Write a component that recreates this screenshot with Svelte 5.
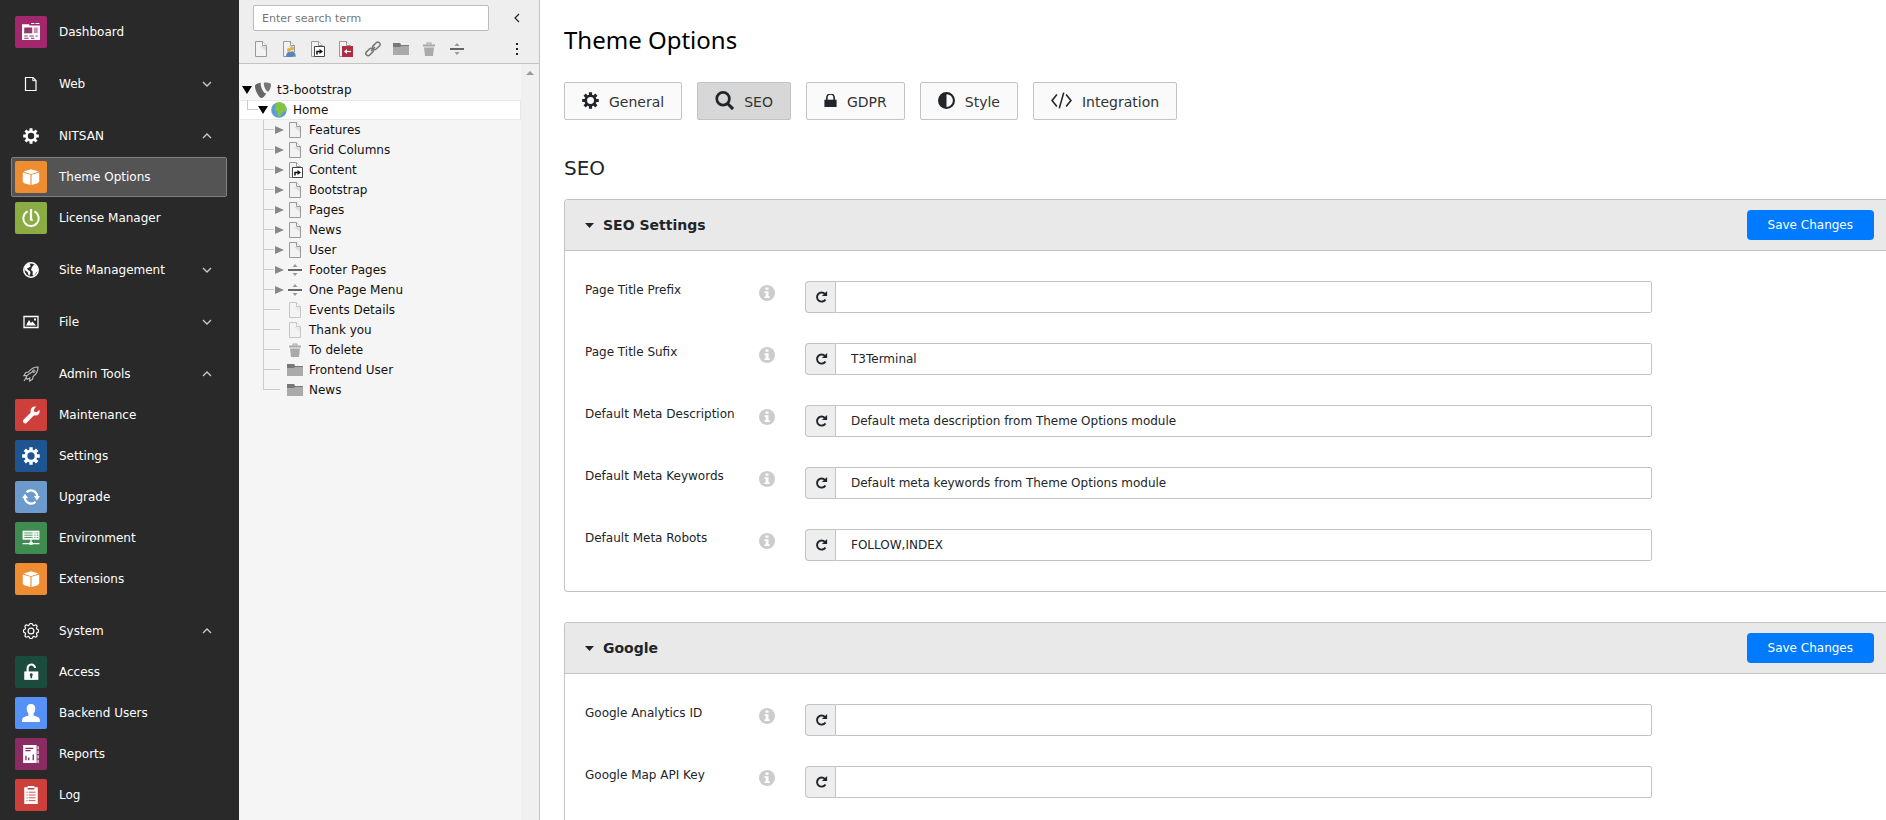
<script lang="ts">
	let activeModule = $state('Theme Options');
	let activeTab = $state('SEO');
	let activePage = $state('Home');

	const modules = [
		{
			items: [{ label: 'Dashboard', icon: 'dashboard', tone: 'plum' }]
		},
		{ title: 'Web', icon: 'file', items: [] },
		{
			title: 'NITSAN',
			icon: 'gear',
			open: true,
			items: [
				{ label: 'Theme Options', icon: 'box', tone: 'orange' },
				{ label: 'License Manager', icon: 'power', tone: 'lime' }
			]
		},
		{ title: 'Site Management', icon: 'globe', items: [] },
		{ title: 'File', icon: 'image', items: [] },
		{
			title: 'Admin Tools',
			icon: 'rocket',
			open: true,
			items: [
				{ label: 'Maintenance', icon: 'wrench', tone: 'red' },
				{ label: 'Settings', icon: 'gear', tone: 'navy' },
				{ label: 'Upgrade', icon: 'refresh', tone: 'sky' },
				{ label: 'Environment', icon: 'server', tone: 'green' },
				{ label: 'Extensions', icon: 'box', tone: 'orange' }
			]
		},
		{
			title: 'System',
			icon: 'gearOutline',
			open: true,
			items: [
				{ label: 'Access', icon: 'unlock', tone: 'forest' },
				{ label: 'Backend Users', icon: 'user', tone: 'blue' },
				{ label: 'Reports', icon: 'report', tone: 'wine' },
				{ label: 'Log', icon: 'log', tone: 'red' }
			]
		}
	];

	const tools = [
		{ label: 'New page', icon: 'page' },
		{ label: 'New backend user section', icon: 'pageUsers' },
		{ label: 'New shortcut', icon: 'pageShortcut' },
		{ label: 'New mount point', icon: 'pageMount' },
		{ label: 'New link', icon: 'link' },
		{ label: 'New folder', icon: 'folder' },
		{ label: 'New recycler', icon: 'trash' },
		{ label: 'New divider', icon: 'divider' }
	];

	const pages = [
		{ label: 't3-bootstrap', icon: 'typo3', level: 0, toggle: 'open' },
		{ label: 'Home', icon: 'earth', level: 1, toggle: 'open', last: true },
		{ label: 'Features', icon: 'page', level: 2, toggle: 'closed' },
		{ label: 'Grid Columns', icon: 'page', level: 2, toggle: 'closed' },
		{ label: 'Content', icon: 'pageShortcut', level: 2, toggle: 'closed' },
		{ label: 'Bootstrap', icon: 'page', level: 2, toggle: 'closed' },
		{ label: 'Pages', icon: 'page', level: 2, toggle: 'closed' },
		{ label: 'News', icon: 'page', level: 2, toggle: 'closed' },
		{ label: 'User', icon: 'page', level: 2, toggle: 'closed' },
		{ label: 'Footer Pages', icon: 'divider', level: 2, toggle: 'closed' },
		{ label: 'One Page Menu', icon: 'divider', level: 2, toggle: 'closed' },
		{ label: 'Events Details', icon: 'page', level: 2, hidden: true },
		{ label: 'Thank you', icon: 'page', level: 2, hidden: true },
		{ label: 'To delete', icon: 'trash', level: 2 },
		{ label: 'Frontend User', icon: 'folder', level: 2 },
		{ label: 'News', icon: 'folder', level: 2, last: true }
	];

	const tabs = [
		{ label: 'General', icon: 'cog', width: 17 },
		{ label: 'SEO', icon: 'search', width: 19 },
		{ label: 'GDPR', icon: 'lock', width: 13 },
		{ label: 'Style', icon: 'contrast', width: 17 },
		{ label: 'Integration', icon: 'code', width: 21 }
	];

	let sections = $state([
		{
			title: 'SEO Settings',
			fields: [
				{ id: 'title-prefix', label: 'Page Title Prefix', value: '' },
				{ id: 'title-sufix', label: 'Page Title Sufix', value: 'T3Terminal' },
				{
					id: 'meta-description',
					label: 'Default Meta Description',
					value: 'Default meta description from Theme Options module'
				},
				{
					id: 'meta-keywords',
					label: 'Default Meta Keywords',
					value: 'Default meta keywords from Theme Options module'
				},
				{ id: 'meta-robots', label: 'Default Meta Robots', value: 'FOLLOW,INDEX' }
			]
		},
		{
			title: 'Google',
			fields: [
				{ id: 'analytics-id', label: 'Google Analytics ID', value: '' },
				{ id: 'map-key', label: 'Google Map API Key', value: '' }
			]
		}
	]);

	const sheet =
		'<path d="M2.5.5h7l4 4v11h-11z" fill="#f2f2f2" stroke="#999"/><path d="M9.5.5v4h4" fill="#fff" stroke="#999"/><path d="M7 5l6 5V5z" fill="#ddd"/>';

	const teeth =
		'<circle cx="8" cy="8" r="4.5" fill="none" stroke="currentColor" stroke-width="2.5"/><path d="M8 .2v3M8 12.8v3M.2 8h3M12.8 8h3M2.5 2.5l2 2M11.5 11.5l2 2M13.5 2.5l-2 2M4.5 11.5l-2 2" stroke="currentColor" stroke-width="3"/>';

	// all drawn on a 16x16 grid
	const icons: Record<string, string> = {
		dashboard:
			'<path d="M0 1h6l1 1.2h9V15H0z"/><path d="M8 .3h3M12 .3h3.5" stroke="currentColor"/><path d="M2 4h7v5H2z" fill="#a3276c"/><path d="M10.5 4H14v5h-3.5z" fill="#d08bb2"/><path d="M2 8l3-2 4-1v4H2z" fill="#7d4b70"/><path d="M2 11.5h3M6.5 11.5h4M12 11.5h2M2 13.5h4M8 13.5h3" stroke="#a3276c"/>',
		file: '<path d="M2.5 1.500h7.500l3 3v10H2.500z" fill="none" stroke="currentColor" stroke-width="1.2"/><path d="M9.8 1.5v3.2H13" fill="none" stroke="currentColor"/>',
		gear: teeth,
		cog: teeth,
		gearOutline:
			'<g fill="none" stroke="currentColor" stroke-width="1.2"><circle cx="8" cy="8" r="2.9"/><path d="M9.6 1.4c-.5-1.3-2.700-1.3-3.2 0l-.2.5a1 1 0 0 1-1.4.5l-.5-.2C2.700 1.500 1.500 2.700 2.200 4.300l.2.500a1 1 0 0 1-.5 1.400l-.5.2c-1.300.5-1.300 2.700 0 3.200l.5.2a1 1 0 0 1 .5 1.400l-.2.5c-.7 1.600.5 2.800 2.100 2.100l.5-.2a1 1 0 0 1 1.400.5l.2.500c.5 1.300 2.700 1.300 3.200 0l.2-.5a1 1 0 0 1 1.400-.5l.5.2c1.600.7 2.800-.5 2.100-2.100l-.2-.5a1 1 0 0 1 .5-1.400l.5-.2c1.300-.5 1.300-2.700 0-3.200l-.5-.2a1 1 0 0 1-.5-1.400l.2-.5c.7-1.600-.5-2.800-2.100-2.100l-.5.2a1 1 0 0 1-1.400-.5z"/></g>',
		box: '<path d="M8 1l6.800 2L8 5.200 1.200 3z"/><path d="M.7 4l6.800 2.100V15L2 13.5.7 12z"/><path d="M15.3 4L8.5 6.1V15l5.5-1.5 1.3-1.5z"/><path d="M2 3h12L8 5.5z"/>',
		power:
			'<path d="M5 2.2a6.800 6.800 0 1 0 6 0" fill="none" stroke="currentColor" stroke-width="1.7"/><path d="M7 0h2v8.500l1 2H7z"/>',
		globe:
			'<circle cx="8" cy="8" r="7.2" fill="none" stroke="currentColor" stroke-width="1.5"/><path d="M2 4l3-2 3-.5L6.5 3 8 4 6 5.5 4 6.500l1 1.500 2 1 .5 2L6 14.5 4.5 10 1.5 8z"/><path d="M9 5l2-2.500 3 1.700 1.200 4L13 11l-2 3-1.500-1 .3-3.500L8 8z"/>',
		image:
			'<path d="M1 2.5h14v11H1z" fill="none" stroke="currentColor" stroke-width="1.3"/><path d="M3 11.5L6 6l2 3 1.5-1.5 3.5 4z"/><path d="M11 4.5h2v2h-2z"/>',
		rocket:
			'<path d="M15 1C10.5 1 7.5 3.2 5.5 6L2.8 6.5 1 9.5l3-.2L3 12l1.2 1.2L6.8 12l-.2 3 3-1.8.5-2.700C13 8.500 15 5.500 15 1zM4.5 9L11 4.800M3 12l-2 3" fill="none" stroke="#bbb" stroke-width="1.2"/><circle cx="10.8" cy="5.2" r="1.3" fill="none" stroke="#bbb"/>',
		wrench:
			'<path d="M12.6.5L10.5 3l.5 2 2 .6 2.500-2.100c.8 2.500-.8 5-3.300 5-.6 0-1-.1-1.500-.2L4 15c-1.500 1.500-4.200-.9-2.700-2.700l6.500-6.500C6.800 2.500 9.300-.2 12.600.5z"/>',
		refresh:
			'<path d="M4 3.800A5.600 5.600 0 0 1 13.500 7.500M12 12.200A5.600 5.600 0 0 1 2.500 8.500" fill="none" stroke="currentColor" stroke-width="2"/><path d="M10.5 7H16l-2.700 4zM0 9l2.700-4L5.500 9z"/>',
		server:
			'<path d="M.5 1.500h15v8H.5z"/><path d="M2 3.500h7.500M2 5.500h7.500M2 7.500h7.500M11 3.500h1M13 3.500h1.500M11 5.500h1M13 5.500h1.500M11 7.500h1M13 7.500h1.500" stroke="#3f8b50" stroke-width=".8"/><path d="M8 9v4M.5 13h15" stroke="currentColor" stroke-width="1.2"/><path d="M6.500 11.500h3v2.500h-3z"/>',
		unlock:
			'<path d="M2 7.500h12.500V15H2z"/><path d="M5 8V4.800a3.300 3.300 0 0 1 6.600-.3" fill="none" stroke="currentColor" stroke-width="1.9"/><path d="M8.2 9a1.400 1.400 0 0 1 .8 2.500v2H7.500v-2A1.400 1.400 0 0 1 8.2 9z" fill="#1a4b3c"/>',
		user: '<path d="M8 0c2.5 0 3.800 1.500 3.800 4 0 2-.7 3.500-1.500 4.500v1.800L14 11.500c1.300.5 2 1.800 2 4.500H0c0-2.700.7-4 2-4.500l3.700-1.200V8.500C4.900 7.500 4.200 6 4.200 4c0-2.500 1.300-4 3.800-4z"/>',
		report:
			'<path d="M1 0h12v16H1z"/><path d="M3 3h7M3 5h4.500M3.500 13.500v-4M6 13.500V11M10 13.500V8.500" stroke="#8a2b63" stroke-width="1.2"/><path d="M14.3 1v15" stroke="currentColor" stroke-dasharray="3 1"/>',
		log: '<path d="M2 1h3V0h6v1h3v15H2z"/><path d="M5 2.500h6" stroke="#6e2020"/><path d="M4 5.500h1M4 8h1M4 10.500h1M4 13h1M6 5.500h6M6 8h6M6 10.500h6M6 13h6" stroke="#cd3f3b" stroke-width=".8"/>',
		page: sheet,
		pageUsers:
			sheet +
			'<circle cx="11" cy="7.5" r="2" fill="#e0b04a"/><path d="M8 16c0-4 1-6 3-6s4 2 4 6z" fill="#5c82bd" stroke="#fff" stroke-width=".5"/><circle cx="8" cy="9" r="2" fill="#e0b04a"/><path d="M5 16c0-3 1-5 3-5s3 2 3 5z" fill="#5c82bd"/>',
		pageShortcut:
			sheet +
			'<path d="M5.5 5.5h10v10h-10z" fill="#fff" stroke="#444"/><path d="M8 13.5v-3h3" fill="none" stroke="#111" stroke-width="1.5"/><path d="M10.5 8l3.5 2.500-3.500 2.500z" fill="#111"/>',
		pageMount:
			sheet +
			'<path d="M5 5h11v11H5z" fill="#b02c40"/><path d="M9 10.5h5" stroke="#fff" stroke-width="1.2"/><path d="M7 10.5L10 8v5z" fill="#fff"/>',
		link: '<g fill="none" stroke="#777" stroke-width="1.5"><rect x="7.5" y="3" width="8.5" height="4.5" rx="2.2" transform="rotate(-45 11 5.5)"/><rect x="0" y="8.5" width="8.5" height="4.5" rx="2.2" transform="rotate(-45 4.7 10.5)"/><path d="M6 10l4-4"/></g>',
		folder:
			'<path d="M0 2h7l1 2h8v10H0z" fill="#aaa"/><path d="M0 2h7l1 2h8v1H8L7 6H0z" fill="#777"/>',
		trash:
			'<path d="M2 3.5h3.500V1.500h5v2H14v2H2zM3 6.500h10L12 15H4z" fill="#aaa"/><path d="M6.5 2.500h3v1h-3z" fill="#ddd"/>',
		divider:
			'<path d="M1 7h14v2H1z" fill="#666"/><path d="M8 2l2.5 3h-5zM8 14l2.500-3h-5z" fill="#999"/>',
		typo3:
			'<path d="M11.3 11.200c-.2 0-.5.1-.7.1C8.300 11.300 5.700 4.600 5.700 2.200c0-.8.2-1.200.5-1.500C4.200 1 1 1.900.3 3.100c-.2.3-.3.7-.3 1.300C0 7.900 3.800 16 6.500 16c1.300 0 3.300-2 4.800-4.800z" fill="#666"/><path d="M10.100.5c2.300 0 5.900.4 5.900 1.900 0 3.200-2 7.200-3 7.200-1.700 0-4.200-5-4.200-7.600 0-1.200.4-1.500 1.300-1.500z" fill="#777"/>',
		earth:
			'<circle cx="8" cy="8" r="7.8" fill="#5e9bd3"/><path d="M4 1.500C6 0 11 0 13 2l2.500 4L15 10l-3-1-1 3-3 3-2-3 .5-2-3-2.500L5 5z" fill="#86c440"/>',
		search:
			'<circle cx="6.8" cy="6.5" r="5.3" fill="none" stroke="currentColor" stroke-width="2.3"/><path d="M10.5 10.5l4.700 4.700" stroke="currentColor" stroke-width="2.6"/>',
		lock: '<path d="M.5 7h15v9H.5z"/><path d="M3.500 8V4.500a4.500 4.500 0 0 1 9 0V8" fill="none" stroke="currentColor" stroke-width="2"/>',
		contrast:
			'<circle cx="8" cy="8" r="7" fill="none" stroke="currentColor" stroke-width="2"/><path d="M8 1a7 7 0 0 0 0 14z"/>',
		code: '<path d="M4.5 3.500L.8 8l3.700 4.500M11.500 3.500L15.200 8l-3.700 4.500M9.700 2L6.300 14" fill="none" stroke="currentColor" stroke-width="1.2"/>',
		info: '<circle cx="8" cy="8" r="8"/><path d="M6.5 2.500h3v2.300h-3zM5.500 6.200h4v5h1.200V13H5.500v-1.800h1.200V8H5.500z" fill="#fff"/>',
		reset:
			'<path d="M12.5 4.500a5.200 5.200 0 1 0 .6 6.300" fill="none" stroke="currentColor" stroke-width="2.2"/><path d="M9 6.800h6V1z"/>'
	};
</script>

<svelte:head>
	<title>Theme Options</title>
</svelte:head>

{#snippet icon(name: string, size: number)}
	<svg class="icon" width={size} height={size} viewBox="0 0 16 16" fill="currentColor" aria-hidden="true">
		{@html icons[name]}
	</svg>
{/snippet}

<div class="backend">
	<nav class="modules" aria-label="Modules">
		{#each modules as group}
			<div class="group">
				{#if group.title}
					<button class="module" aria-expanded={!!group.open}>
						<span class="module-icon">{@render icon(group.icon, 16)}</span>
						<span class="module-label">{group.title}</span>
						<svg class="chevron" width="10" height="6" viewBox="0 0 10 6" aria-hidden="true">
							<path d={group.open ? 'M1 5l4-4 4 4' : 'M1 1l4 4 4-4'} />
						</svg>
					</button>
				{/if}
				{#each group.items as item}
					<a
						href="#module"
						class="module {activeModule === item.label ? 'active' : ''}"
						onclick={() => (activeModule = item.label)}
					>
						<span class="module-icon {item.tone}">{@render icon(item.icon, 18)}</span>
						<span class="module-label">{item.label}</span>
					</a>
				{/each}
			</div>
		{/each}
	</nav>

	<aside class="pagetree">
		<div class="toolbar">
			<div class="toolbar-row">
				<input class="search" type="text" placeholder="Enter search term" aria-label="Enter search term" />
				<button class="tool" aria-label="Collapse page tree">
					<svg width="6" height="10" viewBox="0 0 6 10" aria-hidden="true">
						<path d="M5 1L1 5l4 4" fill="none" stroke="#222" stroke-width="1.2" />
					</svg>
				</button>
			</div>
			<div class="toolbar-row">
				<div class="tools">
					{#each tools as tool}
						<button class="tool" aria-label={tool.label}>{@render icon(tool.icon, 16)}</button>
					{/each}
				</div>
				<button class="tool" aria-label="More options">
					<svg width="4" height="14" viewBox="0 0 4 14" aria-hidden="true">
						<path d="M1 1h2v2H1zM1 6h2v2H1zM1 11h2v2H1z" fill="#222" />
					</svg>
				</button>
			</div>
		</div>

		<div class="tree-area">
			<ul class="tree">
				{#each pages as page}
					<li class="node level-{page.level} {activePage === page.label ? 'selected' : ''}">
						{#if page.level > 0}
							<svg class="branch" width={page.toggle ? 11 : 21} height="20" aria-hidden="true">
								<path d="M.5 0V{page.last ? 10 : 20}M0 9.5H{page.toggle ? 11 : 17}" stroke="#ccc" />
							</svg>
						{/if}
						{#if page.toggle}
							<button class="toggle {page.toggle}" aria-label="Toggle {page.label}">
								<svg width="10" height="10" viewBox="0 0 10 10" aria-hidden="true">
									<path d={page.toggle === 'open' ? 'M0 1h10L5 9z' : 'M1 1v8l9-4z'} />
								</svg>
							</button>
						{/if}
						<span class="node-icon {page.hidden ? 'faded' : ''}">{@render icon(page.icon, 16)}</span>
						<a href="#page" onclick={() => (activePage = page.label)}>{page.label}</a>
					</li>
				{/each}
			</ul>
			<div class="scrollbar">
				<svg width="8" height="4" viewBox="0 0 8 4" aria-hidden="true">
					<path d="M0 4l4-4 4 4z" fill="#999" />
				</svg>
			</div>
		</div>
	</aside>

	<main class="content">
		<h1>Theme Options</h1>

		<div class="tabs" role="tablist">
			{#each tabs as tab}
				<button
					class="tab"
					role="tab"
					aria-selected={activeTab === tab.label}
					onclick={() => (activeTab = tab.label)}
				>
					{@render icon(tab.icon, tab.width)}
					<span>{tab.label}</span>
				</button>
			{/each}
		</div>

		<h2>{activeTab}</h2>

		{#each sections as section}
			<section class="card">
				<header class="card-header">
					<svg width="9" height="5" viewBox="0 0 9 5" aria-hidden="true">
						<path d="M0 0h9L4.5 5z" fill="#212529" />
					</svg>
					<h3>{section.title}</h3>
					<button class="save">Save Changes</button>
				</header>
				<div class="card-body">
					{#each section.fields as field}
						<div class="field">
							<label for={field.id}>{field.label}</label>
							<button class="info" aria-label="About {field.label}">{@render icon('info', 16)}</button>
							<div class="control">
								<button class="reset" aria-label="Reset {field.label}">{@render icon('reset', 14)}</button>
								<input id={field.id} type="text" bind:value={field.value} />
							</div>
						</div>
					{/each}
				</div>
			</section>
		{/each}
	</main>
</div>

<style>
	:global(body) {
		margin: 0;
		overflow: hidden;
		font-family: Verdana, 'DejaVu Sans', sans-serif;
		font-size: 12px;
		color: #212529;
		background: #fff;
	}

	button,
	input {
		box-sizing: border-box;
		margin: 0;
		padding: 0;
		border: 0;
		font: inherit;
		color: inherit;
		background: none;
	}

	button {
		cursor: pointer;
	}

	svg {
		display: block;
		flex: none;
	}

	.backend {
		display: flex;
		height: 100vh;
		overflow: hidden;
	}

	/* module menu */
	.modules {
		display: flex;
		flex-direction: column;
		flex: none;
		gap: 12px;
		box-sizing: border-box;
		width: 239px;
		padding: 12px 12px 0 11px;
		background: #292929;
		overflow: hidden;
	}

	.group {
		display: flex;
		flex-direction: column;
		gap: 1px;
	}

	.module {
		display: flex;
		align-items: center;
		gap: 12px;
		box-sizing: border-box;
		height: 40px;
		padding: 0 14px 0 3px;
		border: 1px solid transparent;
		border-radius: 2px;
		color: #fff;
		text-align: left;
		text-decoration: none;
	}

	.module.active {
		background: #545454;
		border-color: #808080;
	}

	.module-icon {
		display: flex;
		align-items: center;
		justify-content: center;
		width: 32px;
		height: 32px;
		border-radius: 2px;
	}

	.module-label {
		flex: 1;
		line-height: 16px;
		padding-bottom: 1px;
	}

	.chevron {
		fill: none;
		stroke: #ccc;
		stroke-width: 1.3;
	}

	.plum { background: #a3276c; }
	.orange { background: #ee8c31; }
	.lime { background: #8bac42; }
	.red { background: #cd3f3b; }
	.navy { background: #1e5490; }
	.sky { background: #6c9acd; }
	.green { background: #3f8b50; }
	.forest { background: #1a4b3c; }
	.blue { background: #5691f7; }
	.wine { background: #8a2b63; }

	/* page tree */
	.pagetree {
		display: flex;
		flex-direction: column;
		flex: none;
		box-sizing: border-box;
		width: 301px;
		border-right: 1px solid #c3c3c3;
		background: #f5f5f5;
	}

	.toolbar {
		display: flex;
		flex-direction: column;
		gap: 10px;
		padding: 5px 14px 6px;
		border-bottom: 1px solid #c3c3c3;
		background: #eee;
	}

	.toolbar-row {
		display: flex;
		align-items: center;
		justify-content: space-between;
	}

	.search {
		width: 236px;
		height: 26px;
		padding: 0 8px;
		border: 1px solid #bbb;
		border-radius: 2px;
		background: #fff;
		font-size: 11px;
	}

	.search::placeholder {
		color: #777;
	}

	.tools {
		display: flex;
		gap: 12px;
	}

	.tool {
		display: flex;
		align-items: center;
		justify-content: center;
		min-width: 16px;
		height: 16px;
	}

	.tree-area {
		display: flex;
		flex: 1;
	}

	.tree {
		flex: 1;
		margin: 0;
		padding: 16px 0 0;
		list-style: none;
	}

	.node {
		display: flex;
		align-items: center;
		height: 20px;
	}

	.node.selected {
		background: #fff;
		box-shadow: inset 0 0 0 1px #e8e8e8;
	}

	.level-0 {
		padding-left: 3px;
	}

	.level-1 {
		padding-left: 8px;
	}

	.level-2 {
		padding-left: 24px;
	}

	.toggle {
		fill: #000;
	}

	.toggle.closed {
		fill: #888;
	}

	.node-icon {
		margin: 0 6px 0 3px;
	}

	.faded {
		opacity: 0.5;
	}

	.node a {
		line-height: 18px;
		color: #111;
		text-decoration: none;
	}

	.scrollbar {
		display: flex;
		justify-content: center;
		width: 18px;
		padding-top: 7px;
		background: #f0f0f0;
	}

	/* theme options */
	.content {
		flex: 1;
		min-width: 0;
		padding: 22px 0 0 24px;
		overflow: hidden;
	}

	h1 {
		margin: 0 0 24px;
		font-family: 'Noto Sans', sans-serif;
		font-size: 24px;
		font-weight: 400;
		line-height: 36px;
		color: #000;
	}

	.tabs {
		display: flex;
		gap: 15px;
	}

	.tab {
		display: flex;
		align-items: center;
		gap: 10px;
		height: 38px;
		padding: 0 17px;
		border: 1px solid #c3c3c3;
		border-radius: 2px;
		background: #fafafa;
		font-size: 14px;
	}

	.tab[aria-selected='true'] {
		background: #d7d7d7;
	}

	.tab .icon {
		margin-bottom: 2px;
	}

	.tab span {
		padding-top: 2px;
		color: #333;
	}

	h2 {
		margin: 35px 0 18px;
		font-size: 20px;
		font-weight: 400;
		line-height: 26px;
	}

	.card {
		margin-bottom: 30px;
		border: 1px solid #c3c3c3;
		border-right: 0;
		border-radius: 4px 0 0 4px;
		overflow: hidden;
	}

	.card-header {
		display: flex;
		align-items: center;
		gap: 9px;
		height: 50px;
		padding: 0 12px 0 20px;
		border-bottom: 1px solid #c3c3c3;
		background: #e9e9e9;
	}

	h3 {
		flex: 1;
		margin: 0;
		font-size: 14px;
		font-weight: 700;
		line-height: 20px;
	}

	.save {
		height: 30px;
		padding: 0 21px;
		border-radius: 4px;
		background: #007bff;
		color: #fff;
	}

	.card-body {
		display: flex;
		flex-direction: column;
		gap: 30px;
		padding: 30px 0 30px 20px;
	}

	.field {
		display: grid;
		grid-template-columns: 174px 46px 1fr;
		margin-right: 18%;
	}

	.field label {
		padding-top: 1px;
		line-height: 16px;
	}

	.info {
		justify-self: start;
		align-self: start;
		padding-top: 4px;
		color: #ccc;
	}

	.control {
		display: flex;
		height: 32px;
	}

	.reset {
		display: flex;
		align-items: center;
		justify-content: center;
		width: 30px;
		border: 1px solid #c3c3c3;
		border-right: 0;
		border-radius: 4px 0 0 4px;
		background: #eee;
	}

	.control input {
		flex: 1;
		min-width: 0;
		padding: 0 15px;
		border: 1px solid #c3c3c3;
		border-radius: 0 2px 2px 0;
		background: #fff;
	}
</style>
